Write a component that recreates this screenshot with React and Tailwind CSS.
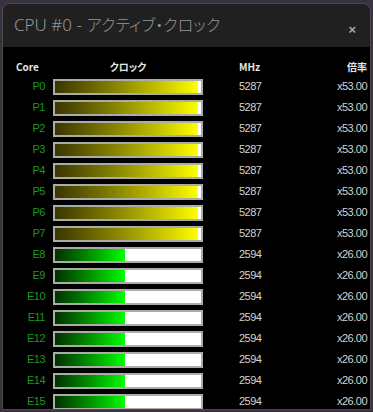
import React from "react";

const cores = [
  ...Array.from({ length: 8 }, (_, i) => ({ name: `P${i}`, mhz: 5287, ratio: "x53.00", type: "p" })),
  ...Array.from({ length: 8 }, (_, i) => ({ name: `E${i + 8}`, mhz: 2594, ratio: "x26.00", type: "e" })),
];

const MAX_MHZ = 5400;

const ClockBar = ({ mhz, type }) => {
  const pct = Math.min(100, (mhz / MAX_MHZ) * 100);
  return (
    <div className="w-[150px] h-[16px] border-2 border-[#acaca6] bg-white flex">
      <div
        className={
          type === "p"
            ? "h-full bg-gradient-to-r from-[#3a3600] to-[#ffff00]"
            : "h-full bg-gradient-to-r from-[#003200] to-[#00ff00]"
        }
        style={{ width: `${pct}%` }}
      />
    </div>
  );
};

export default function App() {
  return (
    <div className="w-[373px] h-[412px] bg-[#3a3240] pt-[3px] px-[2px] pb-[2px] font-['Liberation_Sans',sans-serif]">
      <div className="h-full flex flex-col rounded-t-lg border border-[#4a4a4a] overflow-hidden">
        {/* Title bar */}
        <div className="h-[43px] bg-[#202020] flex items-center pl-[11px] pr-[14px] shrink-0">
          <div className="flex items-baseline text-[#969696] whitespace-nowrap -mt-[2px]">
            <span className="text-[17px] font-light font-['Noto_Sans',sans-serif]">CPU #0 -</span>
            <span className="ml-[5px] text-[16px] font-light font-['Noto_Sans_CJK_JP',sans-serif] [font-feature-settings:'palt']">
              アクティブ・クロック
            </span>
          </div>
          <span className="ml-auto mt-[8px] text-[13px] text-[#a8a8a8] font-bold">×</span>
        </div>

        {/* Body */}
        <div className="flex-1 bg-black pt-[9px]">
          <div className="flex items-center h-[20px] text-[10px] font-bold text-[#e6e6e6] font-['Noto_Sans_CJK_JP',sans-serif]">
            <span className="w-[50px] pl-[13px]">Core</span>
            <span className="w-[150px] text-center [font-feature-settings:'palt']">クロック</span>
            <span className="w-[36px]" />
            <span className="w-[50px]">MHz</span>
            <span className="flex-1 text-right pr-[3px]">倍率</span>
          </div>
          {cores.map((c) => (
            <div key={c.name} className="flex items-center h-[21px] text-[11px]">
              <span className="w-[42px] text-right text-[#1c9a1c] tracking-[-0.5px]">{c.name}</span>
              <span className="w-[8px]" />
              <ClockBar mhz={c.mhz} type={c.type} />
              <span className="w-[36px]" />
              <span className="w-[50px] text-[#d4d4d4] tracking-[-0.5px]">{c.mhz}</span>
              <span className="flex-1 text-right pr-[3px] text-[#d4d4d4] tracking-[-0.5px]">{c.ratio}</span>
            </div>
          ))}
        </div>
      </div>
    </div>
  );
}
